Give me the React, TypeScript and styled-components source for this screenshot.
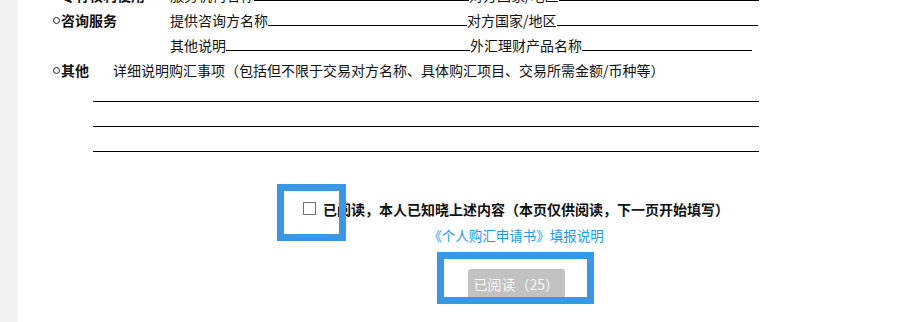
import type { FC } from "react";
import { styled, createGlobalStyle } from "styled-components";

const GlobalStyle = createGlobalStyle`
  html, body {
    margin: 0;
    padding: 0;
    background: #f2f2f2;
    overflow: hidden;
  }
  body {
    font-family: "Noto Sans CJK SC", "Noto Sans", sans-serif;
    color: #111;
  }
`;

const Page = styled.div`
  position: relative;
  display: flow-root;
  margin-left: 18px;
  width: 996px;
  min-height: 100vh;
  background: #fff;
`;

const Form = styled.div`
  margin-top: -17px;
  padding-left: 34px;
`;

const Row = styled.div`
  display: flex;
  align-items: baseline;
  height: 25px;
  line-height: 25px;
  font-size: 14px;
  white-space: nowrap;
`;

const Label = styled.div<{ $w: number }>`
  width: ${({ $w }) => $w}px;
  flex-shrink: 0;
  font-weight: bold;
`;

const Dot = styled.span`
  display: inline-block;
  width: 5px;
  height: 5px;
  border: 1px solid #222;
  border-radius: 50%;
  margin: 0 1px 0 1px;
  vertical-align: 2px;
`;

const Blank = styled.span<{ $w: number }>`
  display: inline-block;
  width: ${({ $w }) => $w}px;
  height: 0;
  border-bottom: 1px solid #000;
`;

const Rules = styled.div`
  margin-left: 41px;
`;

const Rule = styled.div`
  width: 666px;
  height: 18px;
  border-bottom: 1px solid #000;
  & + & {
    margin-top: 6px;
  }
`;

const Confirm = styled.div`
  display: flex;
  flex-direction: column;
  align-items: center;
  margin-top: 47px;
`;

const CheckRow = styled.label`
  display: flex;
  align-items: center;
  gap: 7px;
  height: 20px;
  font-size: 14px;
  font-weight: bold;
  color: #111;
`;

const Box = styled.span`
  display: inline-block;
  width: 11px;
  height: 11px;
  border: 1px solid #707070;
  margin-top: -1px;
`;

const Guide = styled.a`
  margin-top: 6px;
  height: 20px;
  line-height: 20px;
  font-size: 13.5px;
  color: #1a9be8;
  text-decoration: none;
`;

const ReadButton = styled.button`
  margin-top: 24px;
  width: 97px;
  height: 30px;
  padding: 0 0 0 6px;
  text-align: left;
  border: none;
  border-radius: 3px;
  background: #c2c2c2;
  color: #f7f7f7;
  font-family: inherit;
  font-size: 14px;
`;

const Highlight = styled.div<{ $x: number; $y: number; $w: number; $h: number }>`
  position: absolute;
  left: ${({ $x }) => $x}px;
  top: ${({ $y }) => $y}px;
  width: ${({ $w }) => $w}px;
  height: ${({ $h }) => $h}px;
  box-sizing: border-box;
  border: 7px solid #3a97e3;
  pointer-events: none;
`;

const App: FC = () => {
  return (
    <>
      <GlobalStyle />
      <Page>
        <Form>
          <Row>
            <Label $w={118}>
              <Dot />
              专有权利使用
            </Label>
            <span>服务机构名称</span>
            <Blank $w={215} />
            <span>对方国家/地区</span>
            <Blank $w={200} />
          </Row>
          <Row>
            <Label $w={118}>
              <Dot />
              咨询服务
            </Label>
            <span>提供咨询方名称</span>
            <Blank $w={199} />
            <span>对方国家/地区</span>
            <Blank $w={201} />
          </Row>
          <Row>
            <Label $w={118} />
            <span>其他说明</span>
            <Blank $w={244} />
            <span>外汇理财产品名称</span>
            <Blank $w={170} />
          </Row>
          <Row>
            <Label $w={61}>
              <Dot />
              其他
            </Label>
            <span>详细说明购汇事项（包括但不限于交易对方名称、具体购汇项目、交易所需金额/币种等）</span>
          </Row>
          <Rules>
            <Rule />
            <Rule />
            <Rule />
          </Rules>
        </Form>
        <Confirm>
          <CheckRow>
            <Box />
            已阅读，本人已知晓上述内容（本页仅供阅读，下一页开始填写）
          </CheckRow>
          <Guide href="#">《个人购汇申请书》填报说明</Guide>
          <ReadButton disabled>已阅读（25）</ReadButton>
        </Confirm>
        <Highlight $x={259} $y={184} $w={69} $h={57} />
        <Highlight $x={419} $y={252} $w={157} $h={52} />
      </Page>
    </>
  );
};

export default App;
